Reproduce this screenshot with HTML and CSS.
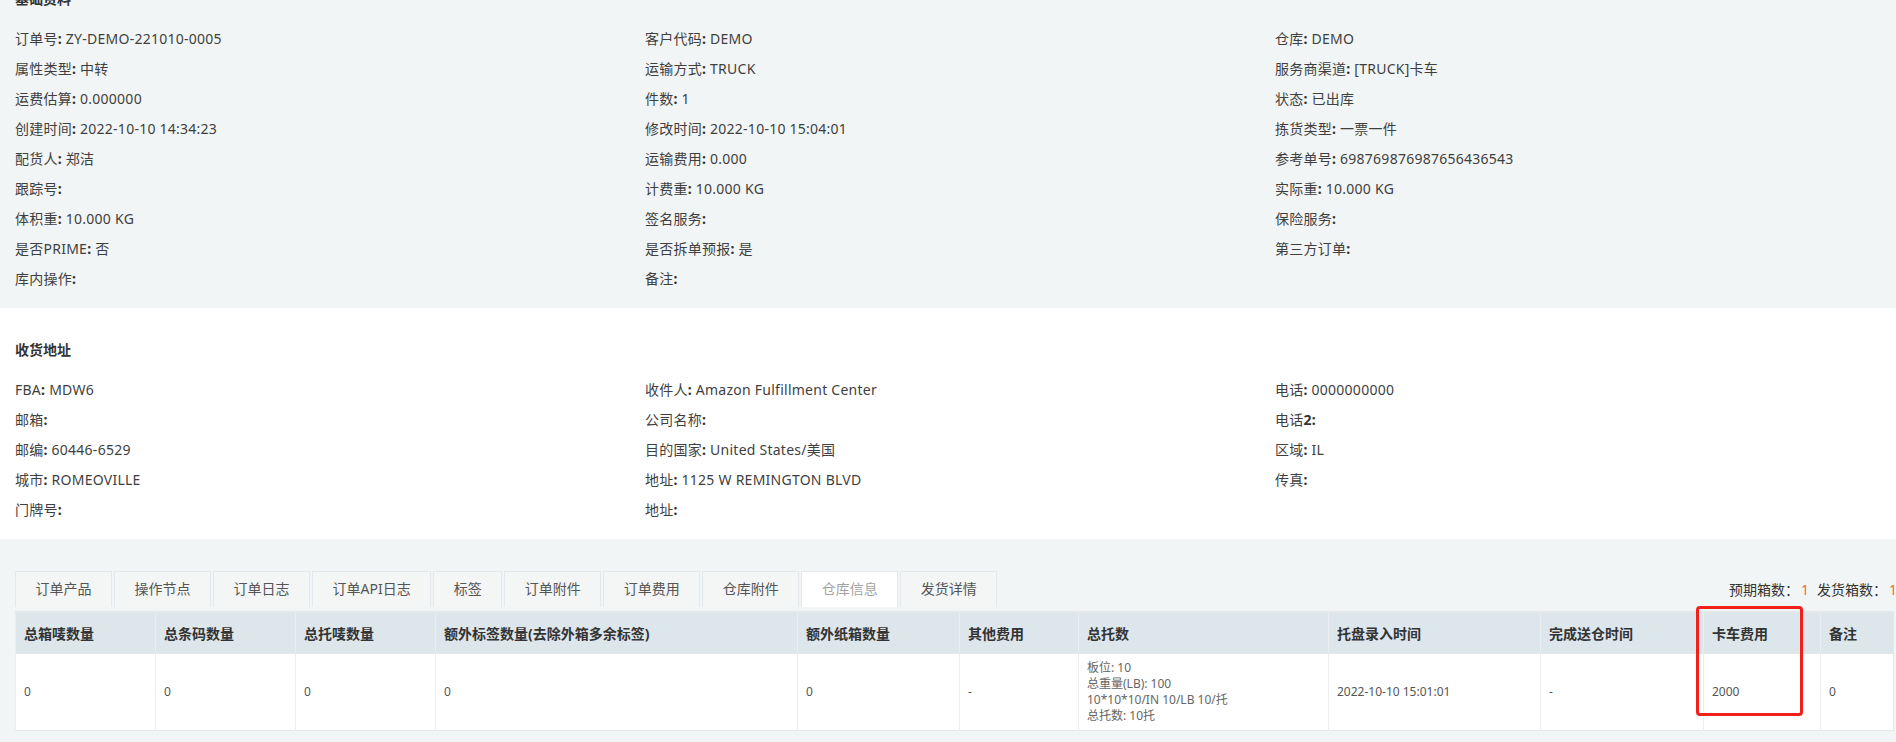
FILE: index.html
```html
<!DOCTYPE html>
<html lang="zh-CN">
<head>
<meta charset="utf-8">
<title>订单详情</title>
<link rel="stylesheet" href="styles.css">
</head>
<body>
<div class="page">
  <section class="panel panel-grey panel-first">
    <h3 class="panel-title">基础资料</h3>
    <div class="info-grid">
      <div class="item">订单号<b>:</b> ZY-DEMO-221010-0005</div>
      <div class="item">客户代码<b>:</b> DEMO</div>
      <div class="item">仓库<b>:</b> DEMO</div>
      <div class="item">属性类型<b>:</b> 中转</div>
      <div class="item">运输方式<b>:</b> TRUCK</div>
      <div class="item">服务商渠道<b>:</b> [TRUCK]卡车</div>
      <div class="item">运费估算<b>:</b> 0.000000</div>
      <div class="item">件数<b>:</b> 1</div>
      <div class="item">状态<b>:</b> 已出库</div>
      <div class="item">创建时间<b>:</b> 2022-10-10 14:34:23</div>
      <div class="item">修改时间<b>:</b> 2022-10-10 15:04:01</div>
      <div class="item">拣货类型<b>:</b> 一票一件</div>
      <div class="item">配货人<b>:</b> 郑洁</div>
      <div class="item">运输费用<b>:</b> 0.000</div>
      <div class="item">参考单号<b>:</b> 698769876987656436543</div>
      <div class="item">跟踪号<b>:</b></div>
      <div class="item">计费重<b>:</b> 10.000 KG</div>
      <div class="item">实际重<b>:</b> 10.000 KG</div>
      <div class="item">体积重<b>:</b> 10.000 KG</div>
      <div class="item">签名服务<b>:</b></div>
      <div class="item">保险服务<b>:</b></div>
      <div class="item">是否PRIME<b>:</b> 否</div>
      <div class="item">是否拆单预报<b>:</b> 是</div>
      <div class="item">第三方订单<b>:</b></div>
      <div class="item">库内操作<b>:</b></div>
      <div class="item">备注<b>:</b></div>
      <div class="item"></div>
    </div>
  </section>

  <section class="panel panel-white">
    <h3 class="panel-title">收货地址</h3>
    <div class="info-grid">
      <div class="item">FBA<b>:</b> MDW6</div>
      <div class="item">收件人<b>:</b> Amazon Fulfillment Center</div>
      <div class="item">电话<b>:</b> 0000000000</div>
      <div class="item">邮箱<b>:</b></div>
      <div class="item">公司名称<b>:</b></div>
      <div class="item">电话<b>2:</b></div>
      <div class="item">邮编<b>:</b> 60446-6529</div>
      <div class="item">目的国家<b>:</b> United States/美国</div>
      <div class="item">区域<b>:</b> IL</div>
      <div class="item">城市<b>:</b> ROMEOVILLE</div>
      <div class="item">地址<b>:</b> 1125 W REMINGTON BLVD</div>
      <div class="item">传真<b>:</b></div>
      <div class="item">门牌号<b>:</b></div>
      <div class="item">地址<b>:</b></div>
      <div class="item"></div>
    </div>
  </section>

  <section class="tabs-area">
    <div class="tabs-bar">
      <ul class="tabs">
        <li class="tab">订单产品</li>
        <li class="tab">操作节点</li>
        <li class="tab">订单日志</li>
        <li class="tab">订单API日志</li>
        <li class="tab">标签</li>
        <li class="tab">订单附件</li>
        <li class="tab">订单费用</li>
        <li class="tab">仓库附件</li>
        <li class="tab tab-active">仓库信息</li>
        <li class="tab">发货详情</li>
      </ul>
      <div class="counts">预期箱数：<span class="num">1</span><span class="sep"></span>发货箱数：<span class="num">1</span></div>
    </div>
    <div class="table-wrap">
      <table class="data-table">
        <colgroup>
          <col class="c140"><col class="c140"><col class="c140"><col class="c362"><col class="c162"><col class="c119"><col class="c250"><col class="c212"><col class="c163"><col class="c117"><col class="c73">
        </colgroup>
        <thead>
          <tr>
            <th>总箱唛数量</th>
            <th>总条码数量</th>
            <th>总托唛数量</th>
            <th>额外标签数量(去除外箱多余标签)</th>
            <th>额外纸箱数量</th>
            <th>其他费用</th>
            <th>总托数</th>
            <th>托盘录入时间</th>
            <th>完成送仓时间</th>
            <th>卡车费用</th>
            <th>备注</th>
          </tr>
        </thead>
        <tbody>
          <tr>
            <td>0</td>
            <td>0</td>
            <td>0</td>
            <td>0</td>
            <td>0</td>
            <td>-</td>
            <td class="multi">板位: 10<br>总重量(LB): 100<br>10*10*10/IN 10/LB 10/托<br>总托数: 10托</td>
            <td>2022-10-10 15:01:01</td>
            <td>-</td>
            <td>2000</td>
            <td>0</td>
          </tr>
        </tbody>
      </table>
      <div class="annot"></div>
    </div>
  </section>
</div>
</body>
</html>
```

FILE: styles.css
```css
html {
  overflow: hidden;
}

body {
  margin: 0;
  background: #f2f5f5;
  font-family: "Noto Sans", "Noto Sans CJK SC", sans-serif;
  color: #3a3a3a;
}

.page {
  width: 1910px;
}

.panel {
  padding: 27px 0 14px 15px;
}

.panel-first {
  margin-top: -43px;
}

.panel-grey {
  background: #f2f5f5;
}

.panel-white {
  background: #ffffff;
}

.panel-title {
  margin: 0 0 10px;
  height: 30px;
  line-height: 30px;
  font-size: 14px;
  font-weight: bold;
  color: #333;
}

.info-grid {
  display: grid;
  grid-template-columns: repeat(3, 630px);
}

.item {
  height: 30px;
  line-height: 30px;
  font-size: 14px;
  letter-spacing: 0.25px;
  color: #3f3f3f;
  white-space: nowrap;
}

.item b {
  font-weight: bold;
  color: #333;
}

.tabs-area {
  background: #f2f5f5;
  padding: 32px 0 14px 15px;
}

.tabs-bar {
  width: 1879px;
  display: flex;
  justify-content: space-between;
  align-items: center;
  height: 36px;
}

.tabs {
  list-style: none;
  margin: 0;
  padding: 0;
  display: flex;
}

.tab {
  box-sizing: border-box;
  height: 36px;
  line-height: 34px;
  padding: 0 19.5px;
  margin-right: 2px;
  border: 1px solid #e3e8ec;
  border-bottom: none;
  background: #f4f5f5;
  font-size: 14px;
  color: #555;
}

.tab-active {
  background: #ffffff;
  color: #a3a3a3;
}

.counts {
  font-size: 14px;
  color: #333;
  margin-right: -3px;
  white-space: nowrap;
}

.counts .num {
  color: #f5683f;
  margin-left: 2px;
}

.counts .sep {
  display: inline-block;
  width: 8px;
}

.table-wrap {
  position: relative;
  margin-top: 4px;
  width: 1879px;
}

.data-table {
  width: 1879px;
  table-layout: fixed;
  border-collapse: collapse;
  border-top: 2px solid #e4e8eb;
  border-left: 1px solid #e4e8eb;
  border-right: 1px solid #e4e8eb;
  border-bottom: 1px solid #e4e8eb;
  background: #ffffff;
}

.c140 { width: 140px; }
.c362 { width: 362px; }
.c162 { width: 162px; }
.c119 { width: 119px; }
.c250 { width: 250px; }
.c212 { width: 212px; }
.c163 { width: 163px; }
.c117 { width: 117px; }
.c73 { width: 73px; }

.data-table th {
  height: 41px;
  box-sizing: border-box;
  padding: 0 8px;
  background: #dde6eb;
  border-left: 1px solid #eaeef1;
  border-bottom: 1px solid #e4e8eb;
  text-align: left;
  font-size: 14px;
  font-weight: bold;
  color: #333;
  white-space: nowrap;
}

.data-table td {
  height: 77px;
  box-sizing: border-box;
  padding: 6px 8px;
  border-left: 1px solid #eaeef1;
  font-size: 12px;
  color: #555;
  vertical-align: middle;
  white-space: nowrap;
}

.data-table td.multi {
  font-size: 12px;
  line-height: 16px;
  color: #666;
}

.annot {
  position: absolute;
  left: 1681px;
  top: -5px;
  width: 107px;
  height: 110px;
  box-sizing: border-box;
  border: 3px solid #f2201b;
  border-radius: 4px;
}
```
